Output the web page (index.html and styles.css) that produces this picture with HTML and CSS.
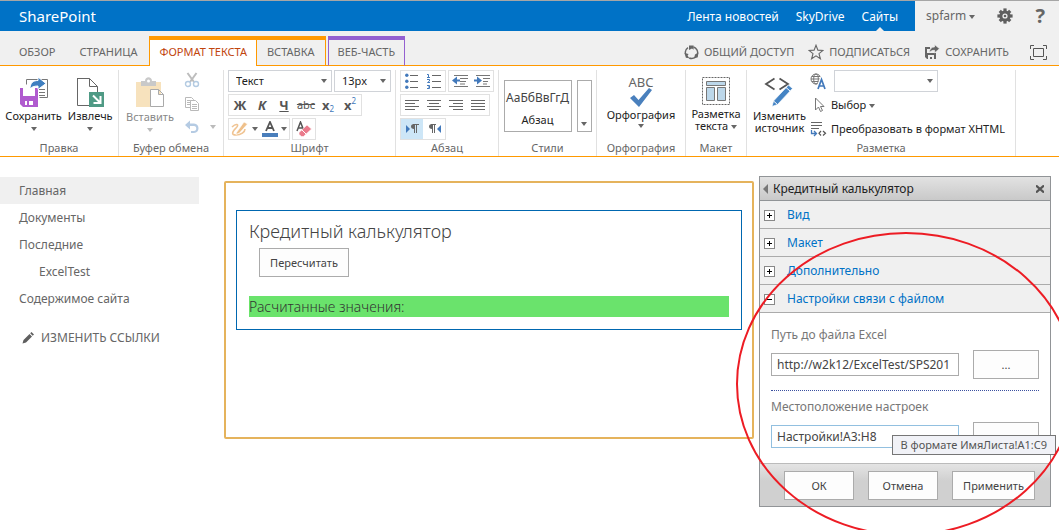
FILE: index.html
```html
<!DOCTYPE html>
<html lang="ru">
<head>
<meta charset="utf-8">
<title>SharePoint</title>
<link rel="stylesheet" href="styles.css">
</head>
<body>
<div class="page">
  <header class="suite">
    <div class="suite-bar">
      <a class="brand" href="#">SharePoint</a>
      <nav class="suite-nav">
        <a href="#">Лента новостей</a>
        <a href="#">SkyDrive</a>
        <a class="current" href="#">Сайты</a>
      </nav>
    </div>
    <div class="suite-user">
      <button class="user" type="button">spfarm <i class="caret"></i></button>
      <button class="plain" type="button" aria-label="Параметры">
        <svg width="16" height="16" viewBox="0 0 16 16"><g fill="#5f5f5f"><circle cx="8" cy="8" r="5.6"/><rect x="6.4" y="0.4" width="3.2" height="15.2"/><rect x="0.4" y="6.4" width="15.2" height="3.2"/><g transform="rotate(45 8 8)"><rect x="6.4" y="0.6" width="3.2" height="14.8"/><rect x="0.6" y="6.4" width="14.8" height="3.2"/></g></g><circle cx="8" cy="8" r="2.600" fill="#f0f0f0"/><circle cx="8" cy="8" r="1.3" fill="#5f5f5f"/></svg>
      </button>
      <button class="plain help" type="button" aria-label="Справка">?</button>
    </div>
  </header>

  <div class="tabs-row">
    <nav class="tabs">
      <a class="tab first" href="#">ОБЗОР</a>
      <a class="tab" href="#">СТРАНИЦА</a>
      <a class="tab active" href="#">ФОРМАТ ТЕКСТА</a>
      <a class="tab insert" href="#">ВСТАВКА</a>
      <a class="tab webpart" href="#">ВЕБ-ЧАСТЬ</a>
    </nav>
    <div class="actions">
      <button class="action" type="button">
        <svg width="15" height="15" viewBox="0 0 15 15" fill="none" stroke="#666" stroke-width="1.4"><path d="M4 2.6A6 6 0 0 0 2 10M5.2 13a6 6 0 0 0 6.2-1M13.4 9.4A6 6 0 0 0 9.5 2"/><g fill="#666" stroke="none"><path d="M5 .6h4.6v4.2L8 3.4 5 5z"/><path d="M.4 8l4.2 1-1 1.6 1.7 2.6-3.4-.4z"/><path d="M14.4 7.6l-.6 4.6-3.6 1.2.8-3.8z"/></g></svg>
        ОБЩИЙ ДОСТУП</button>
      <button class="action" type="button">
        <svg width="16" height="16" viewBox="0 0 16 16" fill="none" stroke="#666" stroke-width="1.1"><path d="M8 1.2l1.9 4.9 5.1.3-4 3.3 1.4 5.1L8 11.9l-4.4 2.9L5 9.7 1 6.4l5.1-.3z"/></svg>
        ПОДПИСАТЬСЯ</button>
      <button class="action" type="button">
        <svg width="16" height="16" viewBox="0 0 16 16"><path d="M1 3h5v2H3v4h9v6H3l-2-2z" fill="#666"/><path d="M4 11h6v4H8v-2H6v2H4z" fill="#f0f0f0"/><path d="M5.500 8.500C5.500 5 7.500 3 10.500 3V.500l5 4.200-5 4.200V6.300c-2 0-3.500.500-5 2.200z" fill="#666" stroke="#f0f0f0" stroke-width=".7"/></svg>
        СОХРАНИТЬ</button>
      <button class="action focus" type="button" aria-label="Сосредоточиться на содержимом">
        <svg width="17" height="15" viewBox="0 0 17 15" fill="none" stroke="#555"><path d="M.5 4V.5H4M13 .5h3.500V4M16.500 11v3.500H13M4 14.500H.5V11M3.500 3.500h10v8h-10z"/></svg>
      </button>
    </div>
  </div>

  <section class="ribbon">
    <div class="group g-edit">
      <div class="body">
        <button class="big" type="button">
          <svg width="30" height="30" viewBox="0 0 30 30"><path d="M7.500 7.500v-5h21v18h-8" fill="#fff" stroke="#777"/><path d="M20 12.500h6M20 15.500h6M20 18.500h6" stroke="#777"/><path d="M1 11h18v19H4l-3-3z" fill="#b05bcf"/><path d="M4 11h12v8H4zM6 24h2v4H6zM10 24h4v4h-4z" fill="#fff"/><path d="M11 12C11 6 14 3.500 19 3.500V0l8 6.500-8 6V9c-4 0-6.500 1-8 3z" fill="#3f7fc0" stroke="#fff"/></svg>
          <span>Сохранить</span><i class="caret"></i></button>
        <button class="big" type="button">
          <svg width="28" height="30" viewBox="0 0 28 30"><path d="M1 1.500h12.500l8 8V15M1.500 1v27.500H13M13.500 1.500v8h8" fill="none" stroke="#666"/><path d="M13 15h15v15H13z" fill="#4f9a85"/><path d="M17 18.500l6.500 6.500M24.500 19v7h-7" fill="none" stroke="#fff" stroke-width="2"/></svg>
          <span>Извлечь</span><i class="caret"></i></button>
      </div>
      <div class="label">Правка</div>
    </div>

    <div class="group g-clip">
      <div class="body">
        <button class="big off" type="button">
          <svg width="30" height="31" viewBox="0 0 30 31"><path d="M1 5h25v25H1z" fill="#f7e2bd"/><path d="M6 9V4h4c0-5 7-5 7 0h4v5z" fill="#c9c9c9"/><circle cx="13.500" cy="4" r="1.500" fill="#fff"/><path d="M15.500 12.500h8l5 5v12h-13zM23.500 12.500v5h5" fill="#fff" stroke="#aaa"/></svg>
          <span>Вставить</span><i class="caret"></i></button>
        <div class="stack">
          <button class="mini" type="button" aria-label="Вырезать"><svg width="16" height="16" viewBox="0 0 16 16" fill="none"><path d="M3.500 1l6.500 9M12.500 1L6 10" stroke="#bdbdbd" stroke-width="2"/><circle cx="4" cy="12" r="2.500" stroke="#b4cbe2" stroke-width="1.400"/><circle cx="12" cy="12" r="2.500" stroke="#b4cbe2" stroke-width="1.400"/></svg></button>
          <button class="mini" type="button" aria-label="Копировать"><svg width="16" height="16" viewBox="0 0 16 16" fill="#fff" stroke="#b9b9b9"><path d="M1.500 1.500h6l2 2v8h-8zM3 4.500h4M3 6.500h3M3 8.500h3"/><path d="M6.500 4.500h5l3 3v7h-8zM8 8.500h5M8 10.500h5M8 12.500h5"/></svg></button>
          <button class="mini undo" type="button" aria-label="Отменить"><svg width="16" height="14" viewBox="0 0 16 14"><path d="M1 5l5-4.500v3h4c6 0 6 9.500 0 9.500H7v-2h3c3 0 3-5 0-5H6v3.500z" fill="#b5cbe3"/></svg><i class="caret"></i></button>
        </div>
      </div>
      <div class="label">Буфер обмена</div>
    </div>

    <div class="group g-font">
      <div class="body rows">
        <div class="row">
          <span class="combo family"><select aria-label="Шрифт"><option>Текст</option></select></span>
          <span class="combo size"><select aria-label="Размер"><option>13px</option></select></span>
        </div>
        <div class="row">
          <div class="box styles">
            <button type="button"><b>Ж</b></button>
            <button type="button"><b><em>К</em></b></button>
            <button type="button"><b><u>Ч</u></b></button>
            <button class="strike" type="button"><s>abc</s></button>
            <button type="button"><b>x</b><sub>2</sub></button>
            <button type="button"><b>x</b><sup>2</sup></button>
          </div>
        </div>
        <div class="row">
          <div class="box colors">
            <button type="button" aria-label="Цвет выделения"><svg width="18" height="16" viewBox="0 0 18 16"><path d="M1 6c4-4 8-3 4 1s-5 7 0 7 9-3 9-6" fill="none" stroke="#f0c493" stroke-width="1.600"/><path d="M5.500 11.500L13 1l3.500 2-8 9-3.500 1.500z" fill="#efc08a" stroke="#fff" stroke-width=".6"/></svg><i class="caret"></i></button>
            <button type="button" aria-label="Цвет текста"><svg width="16" height="16" viewBox="0 0 16 16"><path d="M4 10L8 1l4 9M5.500 7h5" fill="none" stroke="#555" stroke-width="1.800"/><path d="M0 12h16v4H0z" fill="#4a7ebb"/></svg><i class="caret"></i></button>
          </div>
          <div class="box clear">
            <button type="button" aria-label="Очистить формат"><svg width="16" height="16" viewBox="0 0 16 16"><path d="M1 10L4.500 1 8 10M2.500 7h4" fill="none" stroke="#555" stroke-width="1.500"/><path d="M3 11.500L11 4l4.500 4-8 7.500h-2l-2.500-2z" fill="#ea7b8c" stroke="#fff" stroke-width=".6"/><path d="M6 9l4 4" stroke="#fff"/></svg></button>
          </div>
        </div>
      </div>
      <div class="label">Шрифт</div>
    </div>

    <div class="group g-para">
      <div class="body rows">
        <div class="row">
          <div class="box">
            <button type="button" aria-label="Маркеры"><svg width="14" height="16" viewBox="0 0 14 16"><path d="M5 2.500h8M5 8.500h8M5 14.500h8" stroke="#666"/><g fill="#4279bb"><circle cx="1.800" cy="2.300" r="1.700"/><circle cx="1.800" cy="8.300" r="1.700"/><circle cx="1.800" cy="14.300" r="1.700"/></g></svg></button>
            <button type="button" aria-label="Нумерация"><svg width="14" height="16" viewBox="0 0 14 16" fill="none"><path d="M5 2.500h9M5 8.500h9M5 14.500h9" stroke="#666"/><path d="M0 1.500h1.500v3M0 4.500h3M0 6.500h2.500v1.500L.5 9.500H3M0 12.500h2.500v3H0M1 14h1.500" stroke="#4279bb"/></svg></button>
          </div>
          <div class="box">
            <button type="button" aria-label="Уменьшить отступ"><svg width="16" height="12" viewBox="0 0 16 12"><path d="M2 .5h14M8 3.500h8M8 6.500h6M2 11.500h14M8 9h5" stroke="#777"/><path d="M0 5.500L5 1.500v3h3v2H5v3z" fill="#4279bb"/></svg></button>
            <button type="button" aria-label="Увеличить отступ"><svg width="16" height="12" viewBox="0 0 16 12"><path d="M2 .5h14M9 3.500h7M9 6.500h5M2 11.500h14M9 9h4" stroke="#777"/><path d="M8 5.500L3 1.500v3H0v2h3v3z" fill="#4279bb"/></svg></button>
          </div>
        </div>
        <div class="row">
          <div class="box">
            <button type="button" aria-label="По левому краю"><svg width="14" height="11" viewBox="0 0 14 11"><path d="M0 .5h14M0 3.500h10M0 6.500h14M0 9.500h10" stroke="#666"/></svg></button>
            <button type="button" aria-label="По центру"><svg width="14" height="11" viewBox="0 0 14 11"><path d="M0 .5h14M2 3.500h10M0 6.500h14M2 9.500h10" stroke="#666"/></svg></button>
            <button type="button" aria-label="По правому краю"><svg width="14" height="11" viewBox="0 0 14 11"><path d="M0 .5h14M4 3.500h10M0 6.500h14M4 9.500h10" stroke="#666"/></svg></button>
            <button type="button" aria-label="По ширине"><svg width="14" height="11" viewBox="0 0 14 11"><path d="M0 .5h14M0 3.500h14M0 6.500h14M0 9.500h14" stroke="#666"/></svg></button>
          </div>
        </div>
        <div class="row">
          <div class="box">
            <button class="on" type="button" aria-label="Слева направо"><svg width="13" height="10" viewBox="0 0 13 10"><path d="M0 1v8l4-4z" fill="#4279bb"/><path d="M8.500 9V1M10.500 9V1M7 .5h6" stroke="#666"/><path d="M8 5C4 5 4 0 8 0z" fill="#666"/></svg></button>
            <button type="button" aria-label="Справа налево"><svg width="13" height="10" viewBox="0 0 13 10"><path d="M13 1v8L9 5z" fill="#4279bb"/><path d="M4.500 9V1M6.500 9V1M3 .5h5" stroke="#666"/><path d="M4 5C0 5 0 0 4 0z" fill="#666"/></svg></button>
          </div>
        </div>
      </div>
      <div class="label">Абзац</div>
    </div>

    <div class="group g-styles">
      <div class="body gallery">
        <button class="style" type="button"><span class="sample">АаБбВвГгД</span><span>Абзац</span></button>
        <button class="more" type="button" aria-label="Другие стили"><i class="caret"></i></button>
      </div>
      <div class="label">Стили</div>
    </div>

    <div class="group g-spell">
      <div class="body">
        <button class="big" type="button">
          <span class="abc">ABC</span>
          <svg width="24" height="20" viewBox="0 0 24 20"><path d="M1 10l4-3 4.500 5L20 0l3 2L10 19z" fill="#4a80bd"/></svg>
          <span>Орфография</span><i class="caret"></i></button>
      </div>
      <div class="label">Орфография</div>
    </div>

    <div class="group g-layout">
      <div class="body">
        <button class="big" type="button">
          <svg width="28" height="28" viewBox="0 0 28 28"><path d="M.5.5h27v27H.5z" fill="none" stroke="#666" stroke-dasharray="2 1"/><g fill="#bcd7ea" stroke="#777"><path d="M4.500 4.500h19v4h-19zM4.500 10.500h8v13h-8zM15.500 10.500h8v13h-8z"/></g></svg>
          <span>Разметка<br>текста <i class="caret"></i></span></button>
      </div>
      <div class="label">Макет</div>
    </div>

    <div class="group g-markup">
      <div class="body">
        <button class="big" type="button">
          <svg width="30" height="30" viewBox="0 0 30 30"><path d="M10.500 1.500L2 7l8.500 5.500M15.500 1.500L24 7l-8.500 5.500" fill="none" stroke="#555" stroke-width="1.800"/><path d="M8 29.500l1.500-5.500L24.500 8l4 3.500-15 16z" fill="#4584c4" stroke="#fff" stroke-width=".7"/><path d="M22 10.500l4 3.500M9.500 24l4 3.500" stroke="#fff"/></svg>
          <span>Изменить<br>источник</span></button>
        <div class="list">
          <div class="item lang-row">
            <svg width="17" height="17" viewBox="0 0 17 17"><g fill="none" stroke="#777"><circle cx="6" cy="6" r="5"/><ellipse cx="6" cy="6" rx="2.300" ry="5"/><path d="M1 6h10M2 3.500h8M2 8.500h8"/></g><path d="M8 16l3.500-9.500L15 16M9 13h5" fill="none" stroke="#fff" stroke-width="4"/><path d="M8 16l3.500-9.500L15 16M9 13h5" fill="none" stroke="#4279bb" stroke-width="1.700"/></svg>
            <span class="combo lang"><select aria-label="Язык"><option></option></select></span>
          </div>
          <button class="item" type="button">
            <svg width="17" height="16" viewBox="0 0 17 16"><path d="M5.500 1v12l3-3 2 4.500 2-1-2-4h3.500z" fill="#fff" stroke="#777"/></svg>
            <span>Выбор <i class="caret"></i></span></button>
          <button class="item" type="button">
            <svg width="17" height="16" viewBox="0 0 17 16" fill="none"><path d="M1 1.500h11M1 4.500h11M1 7.500h8" stroke="#666"/><path d="M1.500 9v3.500H6M4 10l2.500 2.500L4 15" stroke="#4279bb" stroke-width="1.300"/><path d="M11 10l-2 2.300 2 2.200M13 10l2.500 2.300L13 14.500" stroke="#555" stroke-width="1.200"/></svg>
            <span>Преобразовать в формат XHTML</span></button>
        </div>
      </div>
      <div class="label">Разметка</div>
    </div>
  </section>

  <main class="main">
    <nav class="side">
      <a class="selected" href="#">Главная</a>
      <a href="#">Документы</a>
      <a href="#">Последние</a>
      <a class="sub" href="#">ExcelTest</a>
      <a href="#">Содержимое сайта</a>
      <a class="edit" href="#"><svg width="12" height="12" viewBox="0 0 12 12" fill="#5f5f5f"><path d="M.5 11.500l1-3.500L7.500 2l2.500 2.500L4 10.500zM8.200 1.300L9.500 0 12 2.500l-1.300 1.300z"/></svg>ИЗМЕНИТЬ ССЫЛКИ</a>
    </nav>

    <section class="zone">
      <div class="part">
        <h2>Кредитный калькулятор</h2>
        <button class="btn recalc" type="button">Пересчитать</button>
        <p class="result">Расчитанные значения:</p>
      </div>
    </section>

    <aside class="tool">
      <header class="tool-head"><i class="back"></i><span>Кредитный калькулятор</span>
        <button class="plain" type="button" aria-label="Закрыть"><svg width="8" height="8" viewBox="0 0 8 8"><path d="M0 .5l8 7M8 .5l-8 7" stroke="#555" stroke-width="2.200"/></svg></button></header>
      <button class="fold" type="button"><i class="sign plus"></i>Вид</button>
      <button class="fold" type="button"><i class="sign plus"></i>Макет</button>
      <button class="fold" type="button"><i class="sign plus"></i>Дополнительно</button>
      <button class="fold" type="button"><i class="sign"></i>Настройки связи с файлом</button>
      <div class="fields">
        <label for="path">Путь до файла Excel</label>
        <div class="field"><input id="path" type="text" value="http://w2k12/ExcelTest/SPS201"><button class="btn" type="button">...</button></div>
        <hr>
        <label for="place">Местоположение настроек</label>
        <div class="field"><input class="focused" id="place" type="text" value="Настройки!A3:H8"><button class="btn" type="button" aria-label="Выбрать диапазон"></button></div>
      </div>
      <footer class="tool-foot">
        <button class="btn" type="button">ОК</button>
        <button class="btn" type="button">Отмена</button>
        <button class="btn apply" type="button">Применить</button>
      </footer>
      <div class="tip" role="tooltip">В формате ИмяЛиста!A1:C9</div>
      <svg class="ring" width="342" height="306" viewBox="0 0 342 306"><ellipse cx="171" cy="154" rx="169" ry="151" fill="none" stroke="#ed1c24" stroke-width="2"/></svg>
    </aside>
  </main>
</div>
</body>
</html>
```
FILE: styles.css
```css
* { box-sizing: border-box; }
body { margin: 0; font-family: "Noto Sans", "Open Sans", sans-serif; font-size: 12px; line-height: 16px; color: #444; background: #fff; }
a { color: inherit; text-decoration: none; }
button, input, select { font: inherit; color: inherit; }
button { border: 0; padding: 0; background: none; }
svg { display: block; flex: none; }
.page { position: relative; display: flex; flex-direction: column; min-height: 100vh; overflow: hidden; }
.caret { display: inline-block; border: solid transparent; border-width: 4px 3px 0; border-top-color: #666; vertical-align: middle; }

.suite { display: flex; height: 31px; border-top: 1px solid #a6a6a6; background: #f0f0f0; }
.suite-bar { flex: 1; display: flex; justify-content: space-between; background: #0072c6; color: #fff; padding: 0 17px 0 19px; }
.brand { font-size: 15px; line-height: 31px; }
.suite-nav { display: flex; gap: 17px; line-height: 31px; }
.current { position: relative; }
.current::after { content: ""; position: absolute; left: 50%; bottom: 0; margin-left: -4px; border: solid transparent; border-width: 0 4px 4px; border-bottom-color: #f0f0f0; }
.suite-user { width: 144px; display: flex; align-items: center; justify-content: space-between; padding: 0 14px 0 11px; color: #666; }
.help { font-size: 20px; font-weight: bold; line-height: 28px; }

.tabs-row { display: flex; justify-content: space-between; align-items: flex-end; height: 35px; background: #f0f0f0; box-shadow: inset 0 -1px #f90; font-size: 11px; color: #666; }
.tabs { display: flex; white-space: nowrap; }
.tab { height: 30px; line-height: 22px; padding: 5px 12px 0; }
.tab.first { padding-left: 19px; }
.tab.active { border: 1px solid #f90; border-width: 4px 1px 0; padding: 1px 9px 0; background: #fff; color: #c1450d; }
.tab.insert { border: 1px solid #f90; border-width: 4px 1px 1px 0; padding: 1px 10px 0; }
.tab.webpart { border: 1px solid #9460d0; border-width: 4px 1px 0; border-bottom: 1px solid #f90; padding: 1px 9px 0; margin-left: 2px; }
.actions { display: flex; gap: 14px; padding: 0 12px 6px 0; }
.action { display: flex; align-items: center; gap: 5px; }
.focus { margin-left: 7px; }

.ribbon { display: flex; height: 91px; padding-top: 4px; border-bottom: 1px solid #f90; background: #fff; white-space: nowrap; font-size: 11px; color: #222; }
.group { display: flex; flex-direction: column; border-right: 1px solid #e1e1e1; }
.g-edit { width: 119px; }
.g-clip { width: 105px; }
.g-font { width: 172px; }
.g-para { width: 103px; }
.g-styles { width: 98px; }
.g-spell { width: 89px; }
.g-layout { width: 61px; }
.g-markup { width: 269px; }
.body { flex: 1; display: flex; justify-content: center; gap: 4px; min-height: 0; }
.label { text-align: center; line-height: 16px; color: #666; }
.big { display: flex; flex-direction: column; align-items: center; padding-top: 7px; line-height: 12px; gap: 3px; }
.big .caret { margin-top: 2px; }
.big span .caret { margin-top: 0; }
.off { color: #888; }
.off .caret, .undo .caret { border-top-color: #bbb; }
.g-edit .body { gap: 6px; }
.g-clip .body { gap: 10px; }
.stack { display: flex; flex-direction: column; gap: 8px; padding-top: 2px; }
.mini { display: flex; align-items: center; gap: 10px; }
.rows { flex-direction: column; justify-content: flex-start; gap: 2px; padding-left: 4px; }
.row { display: flex; gap: 2px; }
.combo { display: grid; align-items: center; height: 22px; border: 1px solid #d0d3d8; }
.combo select { grid-area: 1 / 1; appearance: none; border: 0; width: 100%; height: 20px; padding: 0 7px; background: none; }
.combo::after { content: ""; grid-area: 1 / 1; justify-self: end; margin-right: 4px; border: solid transparent; border-width: 4px 3px 0; border-top-color: #666; pointer-events: none; }
.family { width: 104px; }
.size { width: 57px; }
.lang { width: 104px; }
.box { display: flex; height: 22px; border: 1px solid #e1e1e1; }
.box button { width: 22px; display: flex; align-items: center; justify-content: center; gap: 3px; }
.styles button { gap: 0; font-size: 13px; color: #555; }
.styles sub, .styles sup { font-size: 8px; line-height: 8px; color: #4279bb; }
.styles sub { margin-top: 8px; }
.styles sup { margin-top: -8px; }
.styles .strike { font-size: 11px; }
.colors button { width: 30px; }
.on { background: #cde6f7; }
.gallery { gap: 5px; padding-top: 10px; }
.gallery button { height: 52px; border: 1px solid #ababab; }
.style { width: 68px; display: flex; flex-direction: column; align-items: center; justify-content: center; gap: 6px; padding-top: 6px; }
.sample { font-size: 12px; color: #444; }
.more { width: 15px; display: flex; align-items: flex-end; justify-content: center; padding-bottom: 5px; }
.abc { font-size: 13px; line-height: 10px; color: #666; }
.g-spell .big { gap: 1px; }
.list { display: flex; flex-direction: column; align-items: flex-start; gap: 2px; }
.item { display: flex; align-items: center; gap: 4px; height: 22px; }
.lang-row { gap: 7px; }
.g-markup .body { justify-content: flex-start; padding-left: 6px; gap: 4px; }

.main { flex: 1; display: flex; align-items: flex-start; padding-right: 8px; }
.side { width: 199px; margin: 20px 25px 0 0; display: flex; flex-direction: column; color: #666; }
.side a { line-height: 27px; padding-left: 19px; }
.side .selected { background: #f0f0f0; }
.side .sub { padding-left: 39px; }
.side .edit { display: flex; align-items: center; gap: 7px; margin-top: 12px; padding-left: 22px; }
.zone { flex: 1; min-height: 258px; margin: 24px 5px 0 0; padding: 27px 10px; border: 2px solid #e5b35c; border-radius: 2px; }
.part { border: 1px solid #0067b0; padding: 9px 12px 12px; }
.part h2 { margin: 0; font-size: 18px; line-height: 22px; font-weight: 300; }
.btn { height: 29px; border: 1px solid #ababab; background: #fdfdfd; font-size: 11px; color: #444; }
.recalc { display: block; width: 90px; margin: 6px 0 0 10px; }
.result { margin: 19px 0 0; background: #6ae36c; font-size: 14px; line-height: 21px; font-weight: 300; color: #333; }

.tool { position: relative; width: 292px; margin-top: 19px; border: 1px solid #919497; }
.tool-head { display: flex; align-items: center; height: 24px; gap: 5px; padding: 0 6px 0 3px; background: linear-gradient(#e2e2e2, #c9c9c9); border-bottom: 1px solid #919497; color: #222; }
.tool-head span { flex: 1; }
.back { border: solid transparent; border-width: 5px 5px 5px 0; border-right-color: #777; }
.fold { display: flex; align-items: center; gap: 12px; width: 100%; height: 28px; padding: 1px 0 0 4px; background: #f0f0f0; border-bottom: 1px solid #ababab; color: #0072c6; }
.sign { width: 11px; height: 11px; border: 1px solid #888; background: linear-gradient(#000, #000) center / 5px 1px no-repeat #fff; }
.plus { background: linear-gradient(#000, #000) center / 5px 1px no-repeat, linear-gradient(#000, #000) center / 1px 5px no-repeat, #fff; }
.fields { padding: 14px 11px 12px; }
.fields label { display: block; line-height: 16px; color: #777; }
.field { display: flex; align-items: center; gap: 14px; margin-top: 7px; }
.field input { flex: 1; min-width: 0; height: 23px; padding: 0 5px; border: 1px solid #ababab; }
.field .focused { border-color: #92c0e0; }
.field .btn { width: 66px; }
.fields hr { margin: 11px 0 8px; border: 0; border-top: 1px dotted #3c50a0; }
.tool-foot { display: flex; justify-content: flex-end; gap: 14px; padding: 7px 15px 6px; border-top: 1px solid #bbb; background: linear-gradient(#e4e4e4, #d0d0d0 40%); }
.tool-foot .btn { width: 70px; }
.tool-foot .apply { width: 83px; }
.tip { position: absolute; right: -6px; top: 258px; padding: 0 8px; border: 1px solid #767676; background: #f1f2f7; line-height: 18px; font-size: 11px; color: #555; white-space: nowrap; }
.ring { position: absolute; left: -25px; top: 53px; pointer-events: none; }
```
